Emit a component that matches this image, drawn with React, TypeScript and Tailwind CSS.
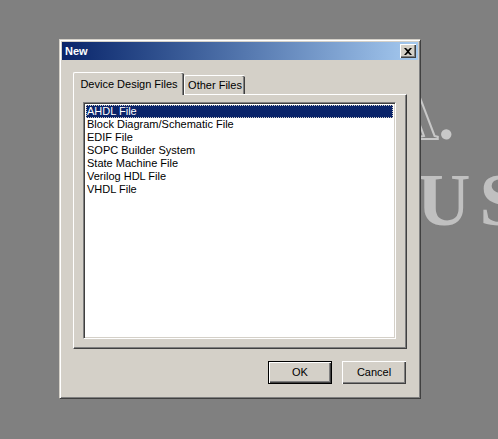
import { useState } from "react";

const files = [
  "AHDL File",
  "Block Diagram/Schematic File",
  "EDIF File",
  "SOPC Builder System",
  "State Machine File",
  "Verilog HDL File",
  "VHDL File",
];

function ClassicButton({ label, isDefault }: { label: string; isDefault?: boolean }) {
  return (
    <button
      className={
        "flex h-[23px] w-[64px] items-center justify-center bg-[#d4d0c8] text-[11px] text-black " +
        (isDefault
          ? "border border-black shadow-[inset_1px_1px_#fff,inset_-1px_-1px_#404040,inset_-2px_-2px_#808080]"
          : "shadow-[inset_1px_1px_#fff,inset_-1px_-1px_#404040,inset_-2px_-2px_#808080]")
      }
    >
      {label}
    </button>
  );
}

export default function App() {
  const [selected, setSelected] = useState(0);

  return (
    <div className="relative h-[439px] w-[498px] overflow-hidden bg-[#808080] font-['Liberation_Sans',Arial,sans-serif]">
      {/* desktop splash behind the dialog */}
      <div className="absolute left-[392px] top-[86px] font-['Liberation_Serif',serif] text-[64px] font-bold leading-none text-transparent [-webkit-text-stroke:2px_#c8c8c8]">
        A<span className="text-[#c8c8c8] [-webkit-text-stroke:0]">.</span>
      </div>
      <div className="absolute left-[417px] top-[163px] font-['Liberation_Serif',serif] text-[74px] font-bold leading-none tracking-[9px] text-[#c0c0c0]">
        US
      </div>

      {/* New dialog window */}
      <div className="absolute left-[59px] top-[39px] flex h-[360px] w-[362px] flex-col border border-[#d4d0c8] border-b-[#404040] border-r-[#404040] bg-[#d4d0c8] p-px shadow-[inset_1px_1px_#fff,inset_-1px_-1px_#808080]">
        <div className="mx-px mt-px flex h-[18px] items-center justify-between bg-gradient-to-r from-[#0a246a] to-[#a6caf0] pl-[3px] pr-[2px]">
          <span className="text-[11px] font-bold text-white">New</span>
          <button className="flex h-[14px] w-[16px] items-center justify-center bg-[#d4d0c8] shadow-[inset_1px_1px_#fff,inset_-1px_-1px_#404040,inset_-2px_-2px_#808080]">
            <svg width="8" height="7" viewBox="0 0 8 7">
              <path d="M0 0h2l2 2 2-2h2L5 3.5 8 7H6L4 5 2 7H0l3-3.5z" fill="#000" />
            </svg>
          </button>
        </div>

        <div className="flex flex-1 flex-col px-[12px] pt-[12px]">
          {/* tabs */}
          <div className="flex items-end">
            <div className="relative z-10 -mb-px flex h-[23px] w-[111px] items-center justify-center rounded-t-[2px] border-l border-t border-white bg-[#d4d0c8] text-[11px] text-black shadow-[inset_-1px_0_#404040,inset_-2px_0_#808080]">
              Device Design Files
            </div>
            <div className="flex h-[19px] w-[61px] items-center justify-center rounded-t-[2px] border-l border-t border-white bg-[#d4d0c8] text-[11px] text-black shadow-[inset_-1px_0_#404040,inset_-2px_0_#808080]">
              Other Files
            </div>
          </div>

          {/* tab panel */}
          <div className="flex h-[255px] w-[334px] border border-white border-b-[#404040] border-r-[#404040] pb-[9px] pl-[9px] pr-[10px] pt-[7px] shadow-[inset_-1px_-1px_#808080]">
            <div className="flex-1 border border-[#808080] border-b-white border-r-white bg-white shadow-[inset_1px_1px_#404040,inset_-1px_-1px_#d4d0c8]">
              <ul className="px-[2px] pt-[2px] text-[11px] leading-[13px] text-black">
                {files.map((f, i) => (
                  <li
                    key={f}
                    onClick={() => setSelected(i)}
                    className={
                      "h-[13px] cursor-default pl-[1px] " +
                      (i === selected ? "bg-[#0a246a] text-white outline outline-1 outline-dotted outline-[#d4d0c8] -outline-offset-1" : "")
                    }
                  >
                    {f}
                  </li>
                ))}
              </ul>
            </div>
          </div>

          {/* buttons */}
          <div className="mt-[12px] flex justify-end gap-[10px] pr-[1px]">
            <ClassicButton label="OK" isDefault />
            <ClassicButton label="Cancel" />
          </div>
        </div>
      </div>
    </div>
  );
}
